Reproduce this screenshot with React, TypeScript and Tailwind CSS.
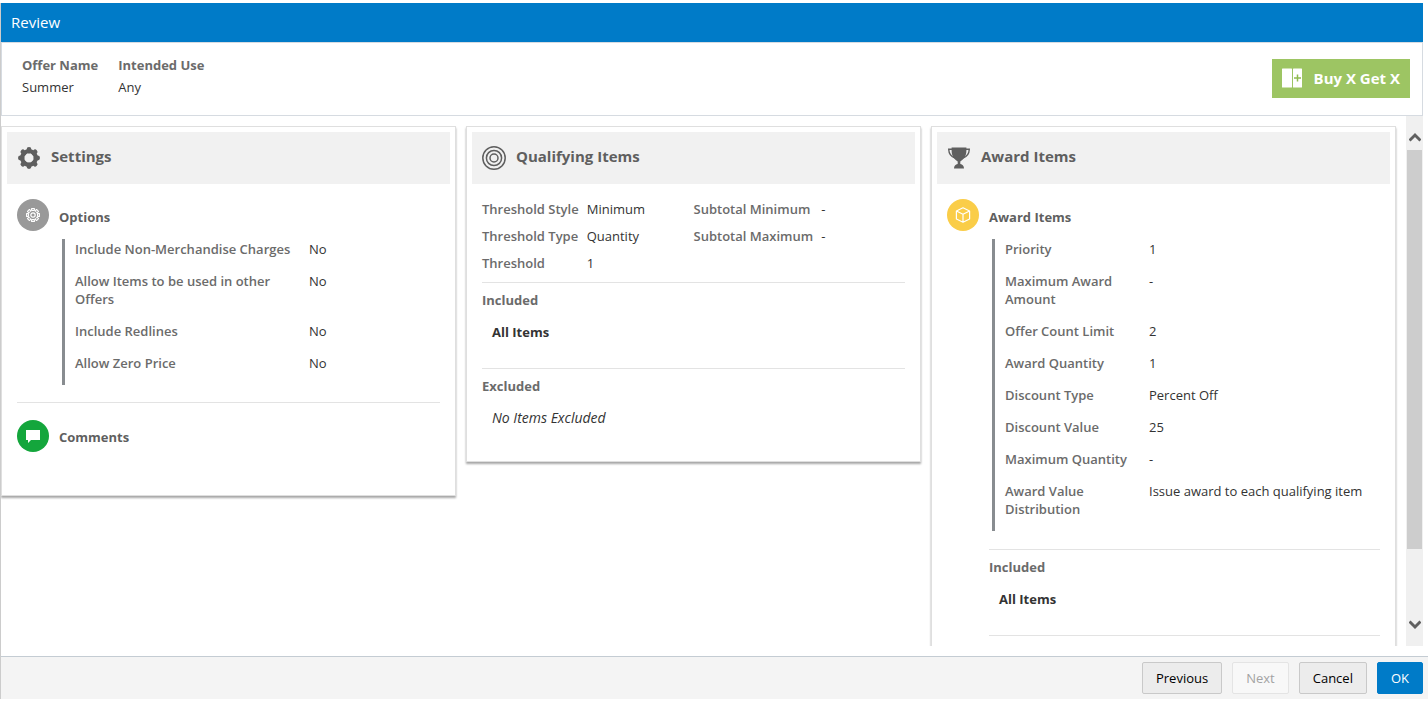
import type { ReactNode } from "react";

type Field = { label: string; value: string };

const options: Field[] = [
  { label: "Include Non-Merchandise Charges", value: "No" },
  { label: "Allow Items to be used in other Offers", value: "No" },
  { label: "Include Redlines", value: "No" },
  { label: "Allow Zero Price", value: "No" },
];

const thresholds: Field[] = [
  { label: "Threshold Style", value: "Minimum" },
  { label: "Threshold Type", value: "Quantity" },
  { label: "Threshold", value: "1" },
];

const subtotals: Field[] = [
  { label: "Subtotal Minimum", value: "-" },
  { label: "Subtotal Maximum", value: "-" },
];

const awards: Field[] = [
  { label: "Priority", value: "1" },
  { label: "Maximum Award Amount", value: "-" },
  { label: "Offer Count Limit", value: "2" },
  { label: "Award Quantity", value: "1" },
  { label: "Discount Type", value: "Percent Off" },
  { label: "Discount Value", value: "25" },
  { label: "Maximum Quantity", value: "-" },
  { label: "Award Value Distribution", value: "Issue award to each qualifying item" },
];

const teeth = [0, 45, 90, 135, 180, 225, 270, 315];

function GearIcon() {
  return (
    <svg className="h-6 w-6" viewBox="0 0 24 24" fill="none" stroke="currentColor">
      <circle cx="12" cy="12" r="6.8" strokeWidth="4.2" />
      {teeth.map((angle) => (
        <path
          key={angle}
          d="M12 5V3.400"
          strokeWidth="4.8"
          strokeLinecap="round"
          transform={`rotate(${angle} 12 12)`}
        />
      ))}
    </svg>
  );
}

function GearOutlineIcon() {
  return (
    <svg className="h-4 w-4" viewBox="0 0 16 16" fill="none" stroke="currentColor">
      <circle cx="8" cy="8" r="2.2" strokeWidth="1.2" />
      <circle cx="8" cy="8" r="4.6" />
      {teeth.map((angle) => (
        <path
          key={angle}
          d="M6.6 3.6V1.6H9.4V3.6"
          strokeWidth="1.1"
          strokeLinejoin="round"
          transform={`rotate(${angle} 8 8)`}
        />
      ))}
    </svg>
  );
}

function TargetIcon() {
  return (
    <svg className="h-6 w-6" viewBox="0 0 24 24" fill="none" stroke="currentColor" strokeWidth="1.5">
      <circle cx="12" cy="12" r="11.2" />
      <circle cx="12" cy="12" r="7.6" />
      <circle cx="12" cy="12" r="4" />
    </svg>
  );
}

function TrophyIcon() {
  return (
    <svg className="h-6 w-6" viewBox="0 0 24 24" fill="currentColor">
      <path d="M4.600 1.500h14.800v3c0 5.500-2.400 8.500-6.100 11v2.500c2.300.6 3.700 2 3.700 4.500H7c0-2.500 1.400-3.900 3.700-4.500v-2.500C7 13 4.600 10 4.600 4.500z" />
      <path
        d="M5.500 3.200H1.700c.2 4.600 2.300 7.400 6.300 8.800M18.500 3.200h3.800c-.2 4.600-2.300 7.400-6.300 8.800"
        fill="none"
        stroke="currentColor"
        strokeWidth="1.4"
      />
    </svg>
  );
}

function CubeIcon() {
  return (
    <svg
      className="h-4 w-4"
      viewBox="0 0 16 16"
      fill="none"
      stroke="currentColor"
      strokeWidth="1.2"
      strokeLinejoin="round"
    >
      <path d="M8 .8l6.600 3.200v8L8 15.200 1.400 12V4zM1.400 4L8 7.300 14.600 4M8 7.300v7.900" />
    </svg>
  );
}

function CommentIcon() {
  return (
    <svg className="h-4 w-4" viewBox="0 0 16 16" fill="currentColor">
      <path d="M1 2h14v10H6l-3 3v-3H1z" />
    </svg>
  );
}

function OfferIcon() {
  return (
    <svg className="h-5 w-5" viewBox="0 0 20 20">
      <rect y="0.500" width="10" height="19" rx="0.500" fill="#fff" />
      <rect x="11" y="0.500" width="9" height="19" rx="0.500" fill="#fff" />
      <path d="M15.500 6.500v7M12 10h7" stroke="#8fbb4f" strokeWidth="1.5" />
    </svg>
  );
}

function Card({ title, icon, children }: { title: string; icon: ReactNode; children: ReactNode }) {
  return (
    <section className="border border-[#dfdfdf] bg-white p-[5px] shadow-[0_2px_2px_rgba(0,0,0,0.35)]">
      <div className="flex h-[52px] items-center gap-2.5 bg-[#f1f1f1] px-2.5 text-[#5f5f5f]">
        {icon}
        <h2 className="pb-1 text-[15px] font-bold">{title}</h2>
      </div>
      <div className="px-2.5 pb-0.5">{children}</div>
    </section>
  );
}

// Label / value pairs behind the grey vertical bar
function FieldList({ fields, labelWidth }: { fields: Field[]; labelWidth: string }) {
  return (
    <dl className="ml-[45px] mt-2 border-l-[3px] border-[#888c90] pl-2.5">
      {fields.map((field) => (
        <div key={field.label} className="flex pb-[13px] pt-px leading-[18px]">
          <dt className={`${labelWidth} shrink-0 font-semibold text-[#6b6b6b]`}>{field.label}</dt>
          <dd>{field.value}</dd>
        </div>
      ))}
    </dl>
  );
}

function FieldGrid({ fields }: { fields: Field[] }) {
  return (
    <dl className="grid grid-cols-[auto_1fr] content-start gap-x-2">
      {fields.map((field) => (
        <div key={field.label} className="col-span-2 grid grid-cols-subgrid leading-[27px]">
          <dt className="font-semibold text-[#6b6b6b]">{field.label}</dt>
          <dd>{field.value}</dd>
        </div>
      ))}
    </dl>
  );
}

function ItemBlock({ title, children }: { title: string; children: ReactNode }) {
  return (
    <div className="h-[86px] border-t border-[#e3e3e3] pt-[7px]">
      <h3 className="font-bold leading-5 text-[#6b6b6b]">{title}</h3>
      <div className="ml-2.5 mt-3 leading-5">{children}</div>
    </div>
  );
}

export default function App() {
  return (
    <div className="flex h-screen flex-col bg-white pb-0.5 pt-[3px] font-['Open_Sans','Noto_Sans',sans-serif] text-[13px] text-[#333]">
      <div className="flex min-h-0 flex-1 flex-col border-l border-[#ccc]">
        <header className="mr-[5px] h-[39px] shrink-0 bg-[#007bc8] px-2.5 leading-[39px] text-white">
          <h1 className="text-[15px]">Review</h1>
        </header>

        <div className="mr-[5px] flex h-[74px] shrink-0 items-center justify-between border border-[#d6dbe1] pl-5 pr-3">
          <dl className="flex gap-5 pb-1.5 leading-[22px]">
            <div>
              <dt className="font-bold text-[#6b6b6b]">Offer Name</dt>
              <dd>Summer</dd>
            </div>
            <div>
              <dt className="font-bold text-[#6b6b6b]">Intended Use</dt>
              <dd>Any</dd>
            </div>
          </dl>
          <div className="mb-0.5 flex h-[39px] items-center gap-3 bg-[#9dc563] px-2.5 text-[15px] font-bold text-white">
            <OfferIcon />
            Buy X Get X
          </div>
        </div>

        <main className="mr-[5px] flex min-h-0 flex-1">
          <div className="grid flex-1 grid-cols-[455fr_455fr_465fr] items-start gap-2.5 overflow-hidden pr-2.5 pt-2.5">
            <Card title="Settings" icon={<GearIcon />}>
              <div className="flex items-center gap-2.5 pt-[15px]">
                <span className="flex h-8 w-8 items-center justify-center rounded-full bg-[#999] text-white">
                  <GearOutlineIcon />
                </span>
                <h3 className="pt-1.5 font-bold text-[#5f5f5f]">Options</h3>
              </div>
              <FieldList fields={options} labelWidth="w-[234px]" />
              <div className="mt-[17px] flex h-[86px] items-start gap-2.5 border-t border-[#e3e3e3] pt-[17px]">
                <span className="flex h-8 w-8 items-center justify-center rounded-full bg-[#14a63c] text-white">
                  <CommentIcon />
                </span>
                <h3 className="pt-2 font-bold text-[#5f5f5f]">Comments</h3>
              </div>
            </Card>

            <Card title="Qualifying Items" icon={<TargetIcon />}>
              <div className="grid grid-cols-2 pb-[5px] pt-3">
                <FieldGrid fields={thresholds} />
                <FieldGrid fields={subtotals} />
              </div>
              <ItemBlock title="Included">
                <strong>All Items</strong>
              </ItemBlock>
              <ItemBlock title="Excluded">
                <em className="text-sm leading-5">No Items Excluded</em>
              </ItemBlock>
            </Card>

            <Card title="Award Items" icon={<TrophyIcon />}>
              <div className="flex items-center gap-2.5 pt-[15px]">
                <span className="flex h-8 w-8 items-center justify-center rounded-full bg-[#facd48] text-white">
                  <CubeIcon />
                </span>
                <h3 className="pt-1.5 font-bold text-[#5f5f5f]">Award Items</h3>
              </div>
              <FieldList fields={awards} labelWidth="w-36" />
              <div className="ml-[42px] mt-[18px]">
                <ItemBlock title="Included">
                  <strong>All Items</strong>
                </ItemBlock>
                <div className="h-20 border-t border-[#e3e3e3]" />
              </div>
            </Card>
          </div>

          {/* Scroll bar */}
          <div className="flex w-[17px] flex-col bg-[#f0f0f0] px-px">
            <button aria-label="Scroll up" className="flex h-[34px] items-center justify-center pt-2 text-[#606060]">
              <svg className="h-2.5 w-3" viewBox="0 0 12 10" fill="none" stroke="currentColor" strokeWidth="3">
                <path d="M0.500 8.500L6 3l5.500 5.500" />
              </svg>
            </button>
            <div className="min-h-0 flex-[399] bg-[#cdcdcd]" />
            <div className="min-h-0 flex-[63]" />
            <button aria-label="Scroll down" className="flex h-[34px] items-center justify-center pb-2 text-[#606060]">
              <svg className="h-2.5 w-3" viewBox="0 0 12 10" fill="none" stroke="currentColor" strokeWidth="3">
                <path d="M0.500 1.500L6 7l5.500-5.500" />
              </svg>
            </button>
          </div>
        </main>

        <footer className="mt-2.5 flex h-[43px] shrink-0 items-center justify-end gap-2.5 border-t border-[#c4ccd3] bg-[#f4f4f4] pr-[5px] text-black">
          <button className="h-8 rounded-xs border border-[#c9c9c9] bg-[#ececec] px-[13px] pt-0.5">Previous</button>
          <button disabled className="h-8 rounded-xs border border-[#e4e4e4] bg-[#f8f8f8] px-[13px] pt-0.5 text-[#a3a3a3]">
            Next
          </button>
          <button className="h-8 rounded-xs border border-[#c9c9c9] bg-[#ececec] px-[13px] pt-0.5">Cancel</button>
          <button className="h-8 rounded-xs border border-[#007bc8] bg-[#007bc8] px-[13px] pt-0.5 text-white">OK</button>
        </footer>
      </div>
    </div>
  );
}
